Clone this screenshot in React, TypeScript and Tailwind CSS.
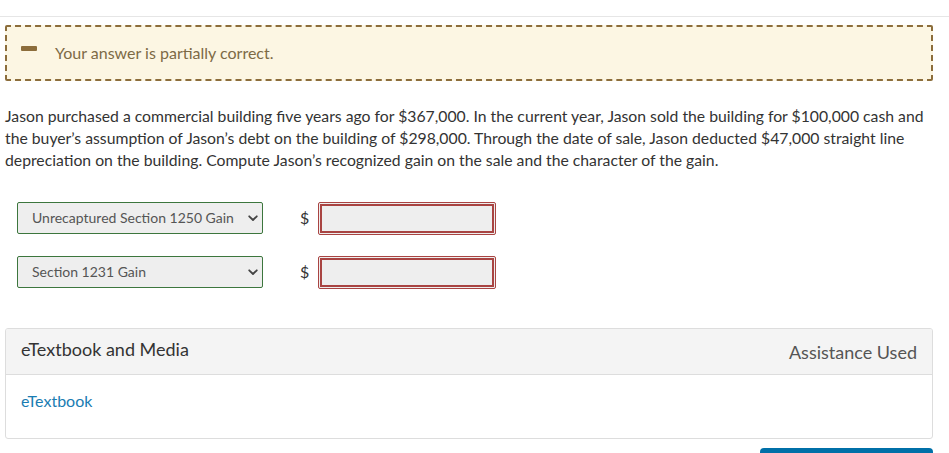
import React from "react";

function Chevron() {
  return (
    <svg width="10" height="7" viewBox="0 0 10 7" className="shrink-0">
      <path d="M1.2 1.3 L5 5 L8.8 1.3" fill="none" stroke="#444" strokeWidth="1.8" strokeLinecap="round" strokeLinejoin="round" />
    </svg>
  );
}

function Row({ label }: { label: string }) {
  return (
    <div className="flex items-center h-[32px]">
      <div className="w-[246px] h-[32px] bg-[#eeeeee] border border-[#3c763d] rounded-[2px] flex items-center justify-between pl-[14px] pr-[4px]">
        <span className="text-[14px] text-[#555] -mt-[1px]">{label}</span>
        <Chevron />
      </div>
      <span className="ml-[37px] w-[18px] text-[16px] text-[#333]">$</span>
      <div className="w-[178px] h-[33px] border border-[#a94442] rounded-[2px] bg-[#eeeeee] p-[1px]">
        <div className="w-full h-full border-2 border-[#a94442]"></div>
      </div>
    </div>
  );
}

export default function App() {
  return (
    <div className="w-[949px] h-[453px] overflow-hidden bg-white" style={{ fontFamily: "Lato, 'Noto Sans', sans-serif" }}>
      <div className="h-[4px] overflow-hidden relative">
        <div className="absolute left-[5px] bottom-[0px] text-[16px] leading-[20px] text-[#333] translate-y-[15px] whitespace-nowrap">Question 5 of 11, Attempt ing</div>
      </div>
      <div className="mt-[12px] border-t border-[#e6e6e6]"></div>
      <div className="pl-[5px] pr-[16px]">
        <div className="mt-[8px] h-[56px] border-2 border-dashed border-[#8c6d3b] bg-[#fcf6e3] rounded-[2px] flex items-center pl-[14px]">
          <div className="w-[16px] h-[5px] bg-[#8c6d3b] rounded-[1px] -mt-[9px]"></div>
          <span className="ml-[18px] text-[16px] text-[#7d6a46]">Your answer is partially correct.</span>
        </div>
        <p className="mt-[24px] text-[15.75px] leading-[22px] text-[#333]">
          Jason purchased a commercial building five years ago for $367,000. In the current year, Jason sold the building for $100,000 cash and the buyer’s assumption of Jason’s debt on the building of $298,000. Through the date of sale, Jason deducted $47,000 straight line depreciation on the building. Compute Jason’s recognized gain on the sale and the character of the gain.
        </p>
        <div className="mt-[31px] pl-[12px] flex flex-col gap-[22px]">
          <Row label="Unrecaptured Section 1250 Gain" />
          <Row label="Section 1231 Gain" />
        </div>
        <div className="mt-[40px] border border-[#dddddd] rounded-[3px] overflow-hidden">
          <div className="h-[46px] bg-[#f4f4f4] border-b border-[#dddddd] flex items-center justify-between pl-[15px] pr-[15px]">
            <span className="text-[18px] text-[#333] -mt-[4px]">eTextbook and Media</span>
            <span className="text-[18px] text-[#555] mt-[1px]">Assistance Used</span>
          </div>
          <div className="h-[63px] pl-[15px] pt-[14px]">
            <span className="text-[16px] text-[#1a7cb2]">eTextbook</span>
          </div>
        </div>
        <div className="flex justify-end mt-[9px]">
          <div className="w-[173px] h-[20px] bg-[#0070a8] rounded-t-[4px]"></div>
        </div>
      </div>
    </div>
  );
}
